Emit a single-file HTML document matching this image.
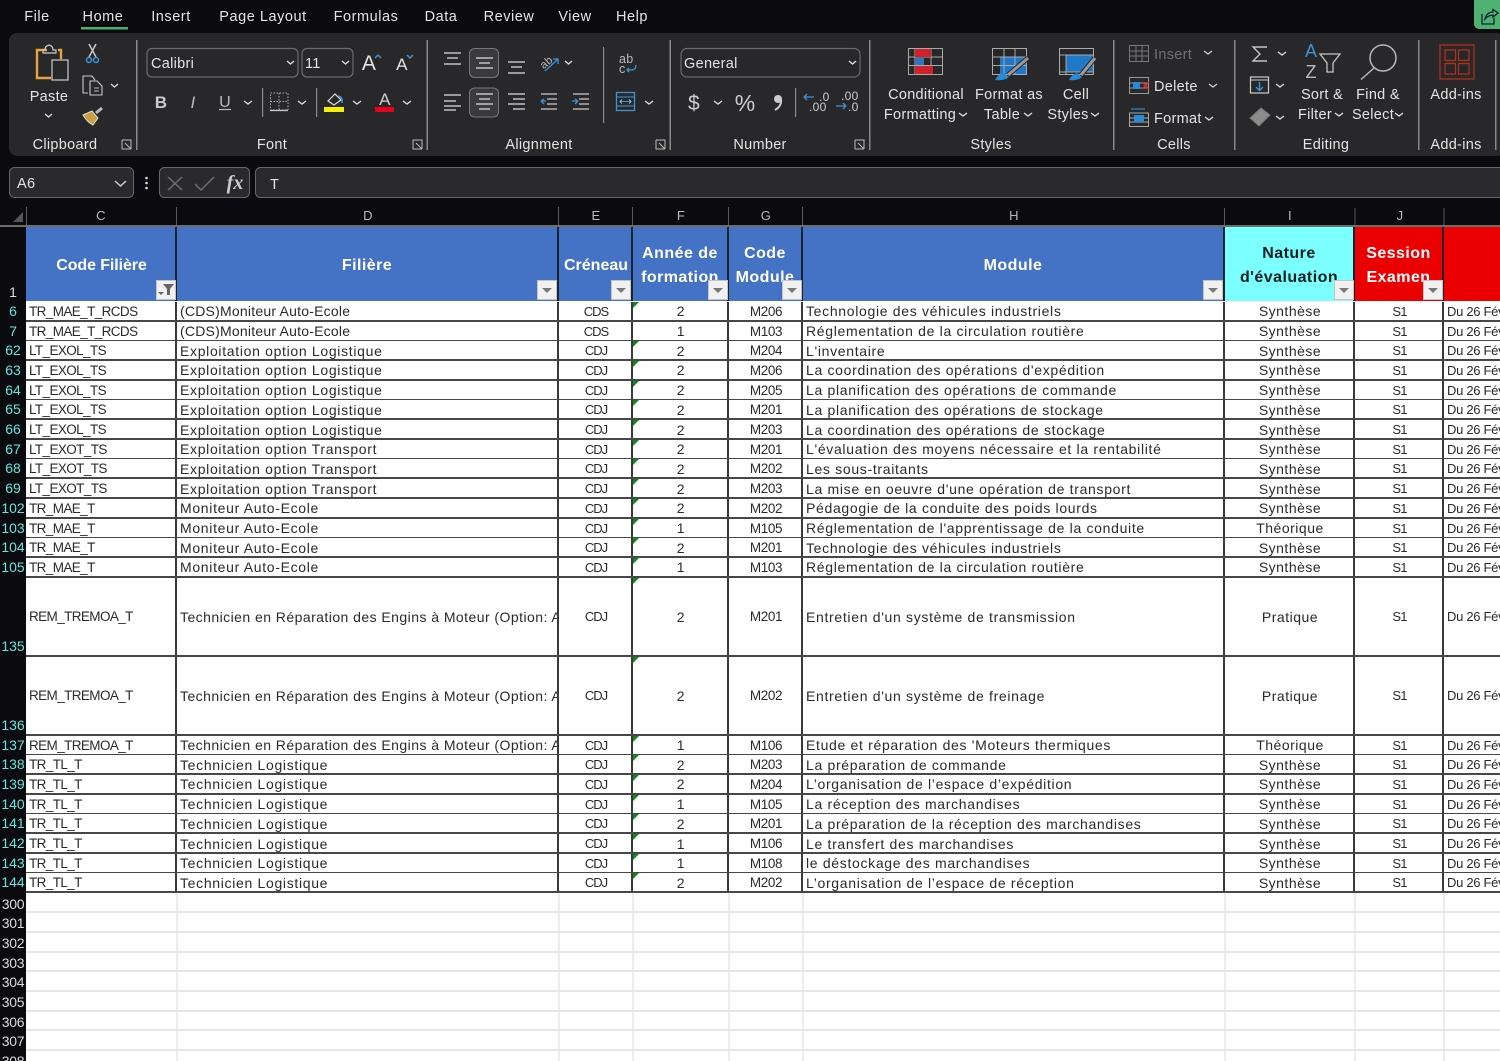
<!DOCTYPE html>
<html><head><meta charset="utf-8"><title>Excel</title>
<style>
html,body{margin:0;padding:0;width:1500px;height:1061px;overflow:hidden;background:#fff;font-family:"Liberation Sans",sans-serif}
#p{position:absolute;left:0;top:0;width:1500px;height:1061px;overflow:hidden}
#top{position:absolute;left:0;top:0;width:1500px;height:227px;display:block}
#top text{font-family:"Liberation Sans",sans-serif;font-size:14.5px;fill:#e4e4e4;letter-spacing:.3px}
#top text.tb{letter-spacing:.55px}
.m{text-anchor:middle}
#rh{position:absolute;left:0;top:227px;width:26px;height:834px;background:#0b0a0e}
.hd{position:absolute;top:227px;height:74px;box-sizing:border-box;padding-top:3px;color:#fff;font-weight:bold;font-size:16px;letter-spacing:.45px;line-height:24px;text-align:center;display:flex;align-items:center;justify-content:center;overflow:hidden;background:#4472c4;border-right:2px solid #1c2230}
.fb{position:absolute;top:280px;width:20px;height:20px;box-sizing:border-box;background:#f1f1f1;border:1px solid #c4c4c4}
.fb:after{content:"";position:absolute;left:4px;top:7px;border-left:5px solid transparent;border-right:5px solid transparent;border-top:5px solid #777}
.r{position:absolute;left:0;width:1500px;box-sizing:border-box;border-bottom:2px solid #47474a;font-size:14px;letter-spacing:.68px;color:#2a2a2a;background:#fff}
.r span{position:absolute;top:0;height:100%;white-space:nowrap;overflow:hidden;display:flex;align-items:center;box-sizing:border-box;padding-top:1px;border-right:2px solid #3a3a3d}
.r b{position:absolute;left:0;top:0;width:26px;height:calc(100% + 2px);background:#0b0a0e;color:#62e6df;font-weight:normal;font-size:14px;letter-spacing:0;text-align:center;display:flex;align-items:flex-end;justify-content:center;padding-bottom:3px;box-sizing:border-box}
.c{left:26px;width:151px;padding-left:3px;font-size:13.500px;letter-spacing:-.6px}
.d{left:177px;width:382px;padding-left:3px}
.s{letter-spacing:.22px}
.tt{letter-spacing:.45px}
.e{left:559px;width:74px;justify-content:center;padding-left:2px;font-size:13px;letter-spacing:-1px}
.f{left:633px;width:96px;justify-content:center;padding-left:2px}
.g{left:729px;width:74px;justify-content:center;padding-left:2px;font-size:13.500px;letter-spacing:-.4px}
.h{left:803px;width:422px;padding-left:3px}
.i{left:1225px;width:130px;justify-content:center;padding-left:2px;letter-spacing:.5px}
.j{left:1355px;width:89px;justify-content:center;padding-left:2px;font-size:13px;letter-spacing:-.8px}
.k{left:1444px;width:80px;padding-left:3px;font-size:13px;letter-spacing:-.3px}
.f:before{content:"";position:absolute;left:0;top:0;border-top:6px solid #0f8a1e;border-right:6px solid transparent}
.n:before{display:none}
.x{position:absolute;left:0;width:1500px;height:19.7px;box-sizing:border-box;border-bottom:2px solid #e6e6e6;background:#fff}
.x b{position:absolute;left:0;top:0;width:26px;height:20px;background:#0b0a0e;color:#dcdcdc;font-weight:normal;font-size:14px;text-align:center;line-height:20px;letter-spacing:-.3px}
.x i{position:absolute;top:0;height:100%;width:2px;background:#ececec}
</style></head><body><div id="p">
<svg id="top" viewBox="0 0 1500 227" xmlns="http://www.w3.org/2000/svg" fill="none">
<rect width="1500" height="227" fill="#0b0a0e"/>
<text x="37" y="21" class="m tb">File</text><text x="103" y="21" class="m tb">Home</text><text x="171" y="21" class="m tb">Insert</text><text x="263" y="21" class="m tb">Page Layout</text><text x="366" y="21" class="m tb">Formulas</text><text x="441" y="21" class="m tb">Data</text><text x="509" y="21" class="m tb">Review</text><text x="575" y="21" class="m tb">View</text><text x="632" y="21" class="m tb">Help</text>
<rect x="81" y="27" width="47" height="2.5" fill="#4caf72"/>
<path d="M1474 0H1500V29H1480Q1474 29 1474 23Z" fill="#50b272"/>
<path d="M1482 14V24H1494V18M1485 19Q1487 12 1493 12V9.5L1498 13L1493 17V15Q1489 15 1485 19Z" stroke="#123" stroke-width="1.3"/>
<rect x="9" y="33" width="1495" height="123" rx="8" fill="#28282a"/>
<g fill="#8a8a8a"><rect x="136" y="40" width="1.5" height="110"/><rect x="426.500" y="40" width="1.500" height="110"/><rect x="669.500" y="40" width="1.500" height="110"/><rect x="869" y="40" width="1.500" height="110" /><rect x="1113" y="40" width="1.500" height="110"/><rect x="1234" y="40" width="1.500" height="110"/><rect x="1418" y="40" width="1.500" height="110"/><rect x="1495" y="40" width="1.500" height="110"/><rect x="603" y="47" width="1.200" height="76"/><rect x="262" y="88" width="1.200" height="29"/><rect x="316" y="88" width="1.200" height="29"/><rect x="795" y="88" width="1.200" height="29"/></g>
<!-- clipboard -->
<path d="M47 50H37V78H51M58 50H61V59" stroke="#e8a33a" stroke-width="2.4"/>
<path d="M45 50Q45 46 49 45Q53 46 53 50H56V53H43V50Z" stroke="#c9c9c9" stroke-width="1.200"/>
<rect x="52" y="60" width="16" height="20" stroke="#cfcfcf" stroke-width="1.200"/>
<text x="49" y="101" class="m">Paste</text>
<path d="M45 114L48.500 117L52 114" stroke="#ddd" stroke-width="1.400"/>
<path d="M89 44L96 57M96 44L89 57" stroke="#c9c9c9" stroke-width="1.500"/><circle cx="89" cy="60" r="2.500" stroke="#3a94d8" stroke-width="1.500"/><circle cx="96" cy="60" r="2.500" stroke="#3a94d8" stroke-width="1.500"/>
<path d="M88 93H83V76H92L95 80M90 81H97L102 86V95H90Z" stroke="#c9c9c9" stroke-width="1.100"/><path d="M94 88H99M94 91H99" stroke="#bbb"/>
<path d="M111 84L114.500 87L118 84" stroke="#ddd" stroke-width="1.400"/>
<path d="M83 115L92 111L98 118L93 125Q87 122 83 115Z" fill="#c9a040" stroke="#ddd"/><path d="M96 113L102 108" stroke="#bbb" stroke-width="3"/>
<text x="65" y="149" class="m">Clipboard</text>
<path d="M122 140H131V149M122 140V149H131M125 143L131 149" stroke="#bbb"/>
<!-- font -->
<rect x="147" y="48.500" width="151" height="28.500" rx="5" stroke="#6a6a6a" stroke-width="1.200"/>
<rect x="302" y="48.500" width="51" height="28.500" rx="5" stroke="#6a6a6a" stroke-width="1.200"/>
<text x="151" y="68">Calibri</text><text x="305" y="68">11</text>
<path d="M287 61L290.500 64L294 61M342 61L345.500 64L349 61" stroke="#ddd" stroke-width="1.400"/>
<text x="369" y="70" class="m" style="font-size:21px">A</text><text x="402" y="70" class="m" style="font-size:17px">A</text>
<path d="M375 58L378 55L381 58" stroke="#3a94d8" stroke-width="1.500"/><path d="M407 55L410 58L413 55" stroke="#3a94d8" stroke-width="1.500"/>
<text x="161" y="108" class="m" style="font-weight:bold;font-size:17px;fill:#ccc">B</text>
<text x="193" y="108" class="m" style="font-style:italic;font-size:17px;fill:#bbb">I</text>
<text x="225" y="107" class="m" style="font-size:16px;fill:#bbb">U</text><path d="M219 109.500H231" stroke="#bbb" stroke-width="1.200"/>
<path d="M244 101L248 104L252 101M298 101L302 104L306 101M353 101L357 104L361 101M403 101L407 104L411 101M714 101L718 104L722 101M645 101L649 104L653 101" stroke="#ddd" stroke-width="1.400"/>
<path d="M270.500 93H288V110H270.500ZM279 93V110M270.500 101.500H288" stroke="#aaa" stroke-dasharray="1.500 1.500"/><path d="M270 110.500H288" stroke="#ccc" stroke-width="1.200"/>
<path d="M328 101L335 94L341 100L334 105Z" stroke="#ddd" stroke-width="1.200"/><path d="M338 96Q343 97 342 103" stroke="#3a94d8" stroke-width="1.500"/>
<rect x="324" y="107" width="20" height="5" fill="#f4f000"/>
<text x="385" y="105" class="m" style="font-size:17px;fill:#ccc">A</text><rect x="375" y="107" width="19" height="5" fill="#e8001c"/>
<text x="272" y="149" class="m">Font</text>
<path d="M413 140H422V149M413 140V149H422M416 143L422 149" stroke="#bbb"/>
<!-- alignment -->
<rect x="469.500" y="48.500" width="29" height="29" rx="5" fill="#3a3a3c" stroke="#777"/>
<rect x="469.500" y="88" width="29" height="29" rx="5" fill="#3a3a3c" stroke="#777"/>
<g stroke="#ddd" stroke-width="1.300">
<path d="M444 53H461M447 58H458M444 64H461"/>
<path d="M476 58H493M479 63H490M476 68H493"/>
<path d="M508 62H525M511 67H522M508 73H525"/>
<path d="M444 95H461M444 101H456M444 106H461M444 110H456" />
<path d="M476 94H493M479 99H490M476 104H493M479 109H490"/>
<path d="M508 94H525M513 99H525M508 104H525M513 109H525"/>
<path d="M541 94H557M547 99H557M547 104H557M541 109H557" stroke="#ccc"/>
<path d="M573 94H589M573 109H589M579 99H589M579 104H589" stroke="#ccc"/>
</g>
<path d="M541 101H546M541 101L544 99M541 101L544 104" stroke="#3a94d8" stroke-width="1.300"/><path d="M572 101H578M578 101L575 99M578 101L575 104" stroke="#3a94d8" stroke-width="1.300"/>
<text x="546" y="66" class="m" transform="rotate(-40 546 62)" style="font-size:11px;fill:#bbb">ab</text><path d="M545 71L558 59M553 59H558V64" stroke="#3a94d8" stroke-width="1.300"/>
<path d="M565 61L568.500 64L572 61" stroke="#ddd" stroke-width="1.400"/>
<text x="619" y="63" style="font-size:12.500px;fill:#bbb">ab</text><text x="619" y="73" style="font-size:12.500px;fill:#bbb">c</text><path d="M636 65Q636 70 631 70H627M629 68L627 70L629 72" stroke="#3a94d8" stroke-width="1.300"/>
<rect x="616.500" y="92.500" width="18" height="18" stroke="#3a94d8" stroke-width="1.300"/><path d="M617 97H634M617 106H634M620 101.500H631" stroke="#3a94d8"/><path d="M622 99.500L620 101.500L622 103.500M629 99.500L631 101.500L629 103.500" stroke="#bbb"/>
<text x="539" y="149" class="m">Alignment</text>
<path d="M656 140H665V149M656 140V149H665M659 143L665 149" stroke="#bbb"/>
<!-- number -->
<rect x="681" y="48.500" width="179" height="28.500" rx="6" stroke="#6a6a6a" stroke-width="1.200"/>
<text x="684" y="68">General</text><path d="M849 61L852.500 64L856 61" stroke="#ddd" stroke-width="1.400"/>
<text x="694" y="110" class="m" style="font-size:21px;fill:#ccc">$</text>
<text x="745" y="111" class="m" style="font-size:23px;fill:#ccc;letter-spacing:0">%</text>
<circle cx="778" cy="99" r="4" fill="#ccc"/><path d="M781 99Q782 106 775 110" stroke="#ccc" stroke-width="2"/>
<text x="819" y="101" style="font-size:12px;fill:#ccc">.0</text><text x="809" y="111" style="font-size:12px;fill:#ccc">.00</text><path d="M804 97H814M804 97L807 94M804 97L807 100" stroke="#3a94d8" stroke-width="1.300"/>
<text x="841" y="100" style="font-size:12px;fill:#ccc">.00</text><text x="848" y="111" style="font-size:12px;fill:#ccc">.0</text><path d="M836 106H846M846 106L843 103M846 106L843 109" stroke="#3a94d8" stroke-width="1.300"/>
<text x="760" y="149" class="m">Number</text>
<path d="M855 140H864V149M855 140V149H864M858 143L864 149" stroke="#bbb"/>
<!-- styles -->
<path d="M908.500 48.500H942.500V74.500H908.500ZM908.500 57H942.500M908.500 65.500H942.500M915 48.500V74.500M931 48.500V74.500" stroke="#aaa"/>
<rect x="915" y="49" width="16" height="8" fill="#d0202e"/><rect x="915" y="66" width="18" height="8" fill="#d0202e"/><rect x="915" y="58" width="9" height="7" fill="#2a78c0"/>
<text x="926" y="99" class="m">Conditional</text><text x="920" y="119" class="m">Formatting</text>
<path d="M959 113L963 116L967 113M1024 113L1028 116L1032 113M1091 113L1095 116L1099 113M1335 113L1339 116L1343 113M1395 113L1399 116L1403 113M1205 117L1209 120L1213 117" stroke="#ddd" stroke-width="1.400"/>
<rect x="1000" y="57" width="26" height="17" fill="#1f78c8"/>
<path d="M992.500 48.500H1026.500V74.500H992.500ZM992.500 57H1026.500M992.500 65.500H1026.500M1004 48.500V74.500M1015 48.500V74.500" stroke="#aaa"/>
<path d="M1008 75L1028 58" stroke="#28282a" stroke-width="5"/><path d="M1008 75L1028 58" stroke="#9a9a9a" stroke-width="3"/><path d="M995 80Q998 74 1004 73L1009 77Q1005 81 995 80Z" fill="#2a8ad8"/>
<text x="1009" y="99" class="m">Format as</text><text x="1002" y="119" class="m">Table</text>
<rect x="1066" y="55" width="27" height="17" fill="#1f78c8"/>
<path d="M1059.500 48.500H1093.500V74.500H1059.500ZM1059.500 55H1093.500M1059.500 72H1093.500M1066 55V74.500" stroke="#aaa"/>
<path d="M1081 75L1095 58" stroke="#28282a" stroke-width="5"/><path d="M1081 75L1095 58" stroke="#9a9a9a" stroke-width="3"/><path d="M1069 80Q1072 74 1077 73L1082 77Q1078 81 1069 80Z" fill="#2a8ad8"/>
<text x="1076" y="99" class="m">Cell</text><text x="1068" y="119" class="m">Styles</text>
<text x="991" y="149" class="m">Styles</text>
<!-- cells -->
<path d="M1129.500 45.500H1148.500V61.500H1129.500ZM1129.500 51H1148.500M1129.500 56H1148.500M1136 45.500V61.500M1142 45.500V61.500" stroke="#777"/>
<text x="1154" y="59" style="fill:#6f6f6f">Insert</text>
<path d="M1204 51L1208 54L1212 51M1209 84L1213 87L1217 84" stroke="#ccc" stroke-width="1.400"/>
<path d="M1129.500 77.500H1148.500V93.500H1129.500ZM1129.500 83H1148.500M1129.500 88H1148.500" stroke="#999"/>
<rect x="1133" y="82" width="7" height="7" fill="#2a8ad8"/><path d="M1142 82L1149 89M1149 82L1142 89" stroke="#e03030" stroke-width="1.300"/>
<text x="1154" y="91">Delete</text>
<path d="M1129.500 113H1148.500V126.500H1129.500ZM1129.500 118H1148.500M1129.500 122H1148.500" stroke="#aaa"/>
<rect x="1134" y="115" width="10" height="7" fill="#2a8ad8"/><path d="M1131 109H1145" stroke="#2a8ad8" stroke-width="1.200"/>
<text x="1154" y="123">Format</text>
<text x="1174" y="149" class="m">Cells</text>
<!-- editing -->
<path d="M1267 47H1253L1260 54L1253 61H1267" stroke="#c4c4c4" stroke-width="1.400"/>
<path d="M1278 52L1282 55L1286 52M1276 84L1280 87L1284 84M1276 116L1280 119L1284 116" stroke="#ddd" stroke-width="1.400"/>
<rect x="1250.500" y="77" width="18" height="16" stroke="#ccc" stroke-width="1.200"/><path d="M1250 80H1269" stroke="#ccc"/><path d="M1259.500 82V90M1256 87L1259.500 90.500L1263 87" stroke="#3a94d8" stroke-width="1.400"/>
<path d="M1250 118L1261 108L1270 115L1259 126Z" fill="#8c8c8c" stroke="#777"/>
<text x="1311" y="57" class="m" style="font-size:18px;fill:#3a94d8;letter-spacing:0">A</text>
<text x="1311" y="78" class="m" style="font-size:18px;fill:#bbb;letter-spacing:0">Z</text>
<path d="M1320 54H1340L1333 63V72H1327V63Z" stroke="#c4c4c4" stroke-width="1.300"/>
<text x="1322" y="99" class="m">Sort &amp;</text><text x="1315" y="119" class="m">Filter</text>
<circle cx="1383" cy="58" r="13" stroke="#b8b8b8" stroke-width="1.500"/><path d="M1374 68L1361 79.500" stroke="#b8b8b8" stroke-width="1.500"/>
<text x="1378" y="99" class="m">Find &amp;</text><text x="1373" y="119" class="m">Select</text>
<text x="1326" y="149" class="m">Editing</text>
<!-- addins -->
<path d="M1440 45H1474V79H1440ZM1445 50H1455.500V60.500H1445ZM1458.500 50H1469V60.500H1458.500ZM1445 63.500H1455.500V74H1445ZM1458.500 63.500H1469V74H1458.500Z" stroke="#b5301a" stroke-width="1.200"/>
<text x="1456" y="99" class="m">Add-ins</text><text x="1456" y="149" class="m">Add-ins</text>
<!-- formula -->
<rect x="9.500" y="167.500" width="124" height="30" rx="5" fill="#2a2a2c" stroke="#666"/>
<rect x="159.500" y="167.500" width="90" height="30" rx="5" fill="#2a2a2c" stroke="#666"/>
<rect x="255.500" y="167.500" width="1260" height="30" rx="5" fill="#2a2a2c" stroke="#666"/>
<text x="17" y="188">A6</text><path d="M115 181L120.500 186L126 181" stroke="#ccc" stroke-width="1.500"/>
<circle cx="146.500" cy="178" r="1.300" fill="#ddd"/><circle cx="146.500" cy="183" r="1.300" fill="#ddd"/><circle cx="146.500" cy="188" r="1.300" fill="#ddd"/>
<path d="M168 177L182 190M182 177L168 190" stroke="#6e6e6e" stroke-width="1.500"/><path d="M195 184L201 190L214 177" stroke="#6e6e6e" stroke-width="1.500"/>
<text x="235" y="189" class="m" style="font-family:'Liberation Serif';font-style:italic;font-weight:bold;font-size:20px;fill:#ccc;letter-spacing:0">fx</text>
<text x="270" y="189">T</text>
<!-- col headers -->
<g stroke="#5a5a5a"><path d="M26.500 207V227M176.500 207V227M558.500 207V227M632.500 207V227M728.500 207V227M802.500 207V227M1224.500 208V227M1355 208V227M1444 208V227"/></g>
<path d="M13 222H23V212Z" fill="#555"/>
<rect x="0" y="225" width="1500" height="2" fill="#6d6d6d"/>
<g><text x="101" y="220" class="m" style="font-size:13px;fill:#bbb">C</text><text x="368" y="220" class="m" style="font-size:13px;fill:#bbb">D</text><text x="596" y="220" class="m" style="font-size:13px;fill:#bbb">E</text><text x="681" y="220" class="m" style="font-size:13px;fill:#bbb">F</text><text x="766" y="220" class="m" style="font-size:13px;fill:#bbb">G</text><text x="1014" y="220" class="m" style="font-size:13px;fill:#bbb">H</text><text x="1290" y="220" class="m" style="font-size:13px;fill:#bbb">I</text><text x="1400" y="220" class="m" style="font-size:13px;fill:#bbb">J</text></g>
</svg>
<div id="rh"></div>
<div style="position:absolute;left:0;top:227px;width:26px;height:74px;color:#ddd;font-size:14px;text-align:center;line-height:130px;overflow:hidden">1</div>
<div class="hd" style="left:26px;width:151px;letter-spacing:-.1px;padding-left:2px">Code Filière</div>
<div class="hd" style="left:177px;width:382px">Filière</div>
<div class="hd" style="left:559px;width:74px;letter-spacing:0;padding-left:2px">Créneau</div>
<div class="hd" style="left:633px;width:96px">Année de<br>formation</div>
<div class="hd" style="left:729px;width:74px">Code<br>Module</div>
<div class="hd" style="left:803px;width:422px">Module</div>
<div class="hd" style="left:1225px;width:130px;background:#7bffff;color:#0c2020">Nature<br>d'évaluation</div>
<div class="hd" style="left:1355px;width:89px;background:#ea0000">Session<br>Examen</div>
<div class="hd" style="left:1444px;width:60px;background:#ea0000;border:0"></div>
<div class="fb" style="left:156px"></div><div class="fb" style="left:537px"></div><div class="fb" style="left:611px"></div><div class="fb" style="left:708px"></div><div class="fb" style="left:782px"></div><div class="fb" style="left:1203px"></div><div class="fb" style="left:1334px"></div><div class="fb" style="left:1423px"></div>
<svg style="position:absolute;left:156px;top:280px" width="20" height="20"><rect x="1" y="1" width="18" height="18" fill="#f1f1f1"/><path d="M7 4H18L14 9V15H11V9Z" fill="#666"/><path d="M2 12H8L5 15Z" fill="#666"/></svg>
<div class="r" style="top:301.500px;height:20px"><b>6</b><span class="c">TR_MAE_T_RCDS</span><span class="d s">(CDS)Moniteur Auto-Ecole</span><span class="e">CDS</span><span class="f">2</span><span class="g">M206</span><span class="h">Technologie des véhicules industriels</span><span class="i">Synthèse</span><span class="j">S1</span><span class="k">Du 26 Février</span></div>
<div class="r" style="top:321.500px;height:20px"><b>7</b><span class="c">TR_MAE_T_RCDS</span><span class="d s">(CDS)Moniteur Auto-Ecole</span><span class="e">CDS</span><span class="f n">1</span><span class="g">M103</span><span class="h">Réglementation de la circulation routière</span><span class="i">Synthèse</span><span class="j">S1</span><span class="k">Du 26 Février</span></div>
<div class="r" style="top:341.200px;height:20px"><b>62</b><span class="c">LT_EXOL_TS</span><span class="d">Exploitation option Logistique</span><span class="e">CDJ</span><span class="f">2</span><span class="g">M204</span><span class="h">L'inventaire</span><span class="i">Synthèse</span><span class="j">S1</span><span class="k">Du 26 Février</span></div>
<div class="r" style="top:360.900px;height:20px"><b>63</b><span class="c">LT_EXOL_TS</span><span class="d">Exploitation option Logistique</span><span class="e">CDJ</span><span class="f">2</span><span class="g">M206</span><span class="h">La coordination des opérations d'expédition</span><span class="i">Synthèse</span><span class="j">S1</span><span class="k">Du 26 Février</span></div>
<div class="r" style="top:380.600px;height:20px"><b>64</b><span class="c">LT_EXOL_TS</span><span class="d">Exploitation option Logistique</span><span class="e">CDJ</span><span class="f">2</span><span class="g">M205</span><span class="h">La planification des opérations de commande</span><span class="i">Synthèse</span><span class="j">S1</span><span class="k">Du 26 Février</span></div>
<div class="r" style="top:400.300px;height:20px"><b>65</b><span class="c">LT_EXOL_TS</span><span class="d">Exploitation option Logistique</span><span class="e">CDJ</span><span class="f">2</span><span class="g">M201</span><span class="h">La planification des opérations de stockage</span><span class="i">Synthèse</span><span class="j">S1</span><span class="k">Du 26 Février</span></div>
<div class="r" style="top:420px;height:20px"><b>66</b><span class="c">LT_EXOL_TS</span><span class="d">Exploitation option Logistique</span><span class="e">CDJ</span><span class="f">2</span><span class="g">M203</span><span class="h">La coordination des opérations de stockage</span><span class="i">Synthèse</span><span class="j">S1</span><span class="k">Du 26 Février</span></div>
<div class="r" style="top:439.700px;height:20px"><b>67</b><span class="c">LT_EXOT_TS</span><span class="d">Exploitation option Transport</span><span class="e">CDJ</span><span class="f">2</span><span class="g">M201</span><span class="h">L'évaluation des moyens nécessaire et la rentabilité</span><span class="i">Synthèse</span><span class="j">S1</span><span class="k">Du 26 Février</span></div>
<div class="r" style="top:459.400px;height:20px"><b>68</b><span class="c">LT_EXOT_TS</span><span class="d">Exploitation option Transport</span><span class="e">CDJ</span><span class="f">2</span><span class="g">M202</span><span class="h">Les sous-traitants</span><span class="i">Synthèse</span><span class="j">S1</span><span class="k">Du 26 Février</span></div>
<div class="r" style="top:479.100px;height:20px"><b>69</b><span class="c">LT_EXOT_TS</span><span class="d">Exploitation option Transport</span><span class="e">CDJ</span><span class="f">2</span><span class="g">M203</span><span class="h">La mise en oeuvre d'une opération de transport</span><span class="i">Synthèse</span><span class="j">S1</span><span class="k">Du 26 Février</span></div>
<div class="r" style="top:498.800px;height:20px"><b>102</b><span class="c">TR_MAE_T</span><span class="d">Moniteur Auto-Ecole</span><span class="e">CDJ</span><span class="f">2</span><span class="g">M202</span><span class="h">Pédagogie de la conduite des poids lourds</span><span class="i">Synthèse</span><span class="j">S1</span><span class="k">Du 26 Février</span></div>
<div class="r" style="top:518.500px;height:20px"><b>103</b><span class="c">TR_MAE_T</span><span class="d">Moniteur Auto-Ecole</span><span class="e">CDJ</span><span class="f">1</span><span class="g">M105</span><span class="h">Réglementation de l'apprentissage de la conduite</span><span class="i">Théorique</span><span class="j">S1</span><span class="k">Du 26 Février</span></div>
<div class="r" style="top:538.200px;height:20px"><b>104</b><span class="c">TR_MAE_T</span><span class="d">Moniteur Auto-Ecole</span><span class="e">CDJ</span><span class="f">2</span><span class="g">M201</span><span class="h">Technologie des véhicules industriels</span><span class="i">Synthèse</span><span class="j">S1</span><span class="k">Du 26 Février</span></div>
<div class="r" style="top:557.900px;height:20px"><b>105</b><span class="c">TR_MAE_T</span><span class="d">Moniteur Auto-Ecole</span><span class="e">CDJ</span><span class="f">1</span><span class="g">M103</span><span class="h">Réglementation de la circulation routière</span><span class="i">Synthèse</span><span class="j">S1</span><span class="k">Du 26 Février</span></div>
<div class="r" style="top:577.600px;height:79.400px"><b>135</b><span class="c">REM_TREMOA_T</span><span class="d tt">Technicien en Réparation des Engins à Moteur (Option: Automobile)</span><span class="e">CDJ</span><span class="f">2</span><span class="g">M201</span><span class="h">Entretien d'un système de transmission</span><span class="i">Pratique</span><span class="j">S1</span><span class="k">Du 26 Février</span></div>
<div class="r" style="top:656.500px;height:79.400px"><b>136</b><span class="c">REM_TREMOA_T</span><span class="d tt">Technicien en Réparation des Engins à Moteur (Option: Automobile)</span><span class="e">CDJ</span><span class="f">2</span><span class="g">M202</span><span class="h">Entretien d'un système de freinage</span><span class="i">Pratique</span><span class="j">S1</span><span class="k">Du 26 Février</span></div>
<div class="r" style="top:735.500px;height:20px"><b>137</b><span class="c">REM_TREMOA_T</span><span class="d tt">Technicien en Réparation des Engins à Moteur (Option: Automobile)</span><span class="e">CDJ</span><span class="f">1</span><span class="g">M106</span><span class="h">Etude et réparation des 'Moteurs thermiques</span><span class="i">Théorique</span><span class="j">S1</span><span class="k">Du 26 Février</span></div>
<div class="r" style="top:755.200px;height:20px"><b>138</b><span class="c">TR_TL_T</span><span class="d">Technicien Logistique</span><span class="e">CDJ</span><span class="f">2</span><span class="g">M203</span><span class="h">La préparation de commande</span><span class="i">Synthèse</span><span class="j">S1</span><span class="k">Du 26 Février</span></div>
<div class="r" style="top:774.900px;height:20px"><b>139</b><span class="c">TR_TL_T</span><span class="d">Technicien Logistique</span><span class="e">CDJ</span><span class="f">2</span><span class="g">M204</span><span class="h">L’organisation de l’espace d’expédition</span><span class="i">Synthèse</span><span class="j">S1</span><span class="k">Du 26 Février</span></div>
<div class="r" style="top:794.600px;height:20px"><b>140</b><span class="c">TR_TL_T</span><span class="d">Technicien Logistique</span><span class="e">CDJ</span><span class="f">1</span><span class="g">M105</span><span class="h">La réception des marchandises</span><span class="i">Synthèse</span><span class="j">S1</span><span class="k">Du 26 Février</span></div>
<div class="r" style="top:814.300px;height:20px"><b>141</b><span class="c">TR_TL_T</span><span class="d">Technicien Logistique</span><span class="e">CDJ</span><span class="f">2</span><span class="g">M201</span><span class="h">La préparation de la réception des marchandises</span><span class="i">Synthèse</span><span class="j">S1</span><span class="k">Du 26 Février</span></div>
<div class="r" style="top:834px;height:20px"><b>142</b><span class="c">TR_TL_T</span><span class="d">Technicien Logistique</span><span class="e">CDJ</span><span class="f">1</span><span class="g">M106</span><span class="h">Le transfert des marchandises</span><span class="i">Synthèse</span><span class="j">S1</span><span class="k">Du 26 Février</span></div>
<div class="r" style="top:853.700px;height:20px"><b>143</b><span class="c">TR_TL_T</span><span class="d">Technicien Logistique</span><span class="e">CDJ</span><span class="f">1</span><span class="g">M108</span><span class="h">le déstockage des marchandises</span><span class="i">Synthèse</span><span class="j">S1</span><span class="k">Du 26 Février</span></div>
<div class="r" style="top:873.400px;height:20px"><b>144</b><span class="c">TR_TL_T</span><span class="d">Technicien Logistique</span><span class="e">CDJ</span><span class="f">2</span><span class="g">M202</span><span class="h">L’organisation de l’espace de réception</span><span class="i">Synthèse</span><span class="j">S1</span><span class="k">Du 26 Février</span></div>
<div class="x" style="top:893.500px"><b>300</b><i style="left:176px"></i><i style="left:558px"></i><i style="left:632px"></i><i style="left:728px"></i><i style="left:802px"></i><i style="left:1224px"></i><i style="left:1354px"></i><i style="left:1443px"></i></div>
<div class="x" style="top:913.200px"><b>301</b><i style="left:176px"></i><i style="left:558px"></i><i style="left:632px"></i><i style="left:728px"></i><i style="left:802px"></i><i style="left:1224px"></i><i style="left:1354px"></i><i style="left:1443px"></i></div>
<div class="x" style="top:932.900px"><b>302</b><i style="left:176px"></i><i style="left:558px"></i><i style="left:632px"></i><i style="left:728px"></i><i style="left:802px"></i><i style="left:1224px"></i><i style="left:1354px"></i><i style="left:1443px"></i></div>
<div class="x" style="top:952.600px"><b>303</b><i style="left:176px"></i><i style="left:558px"></i><i style="left:632px"></i><i style="left:728px"></i><i style="left:802px"></i><i style="left:1224px"></i><i style="left:1354px"></i><i style="left:1443px"></i></div>
<div class="x" style="top:972.300px"><b>304</b><i style="left:176px"></i><i style="left:558px"></i><i style="left:632px"></i><i style="left:728px"></i><i style="left:802px"></i><i style="left:1224px"></i><i style="left:1354px"></i><i style="left:1443px"></i></div>
<div class="x" style="top:992px"><b>305</b><i style="left:176px"></i><i style="left:558px"></i><i style="left:632px"></i><i style="left:728px"></i><i style="left:802px"></i><i style="left:1224px"></i><i style="left:1354px"></i><i style="left:1443px"></i></div>
<div class="x" style="top:1011.700px"><b>306</b><i style="left:176px"></i><i style="left:558px"></i><i style="left:632px"></i><i style="left:728px"></i><i style="left:802px"></i><i style="left:1224px"></i><i style="left:1354px"></i><i style="left:1443px"></i></div>
<div class="x" style="top:1031.400px"><b>307</b><i style="left:176px"></i><i style="left:558px"></i><i style="left:632px"></i><i style="left:728px"></i><i style="left:802px"></i><i style="left:1224px"></i><i style="left:1354px"></i><i style="left:1443px"></i></div>
<div class="x" style="top:1051.100px"><b>308</b><i style="left:176px"></i><i style="left:558px"></i><i style="left:632px"></i><i style="left:728px"></i><i style="left:802px"></i><i style="left:1224px"></i><i style="left:1354px"></i><i style="left:1443px"></i></div>
</div></body></html>
